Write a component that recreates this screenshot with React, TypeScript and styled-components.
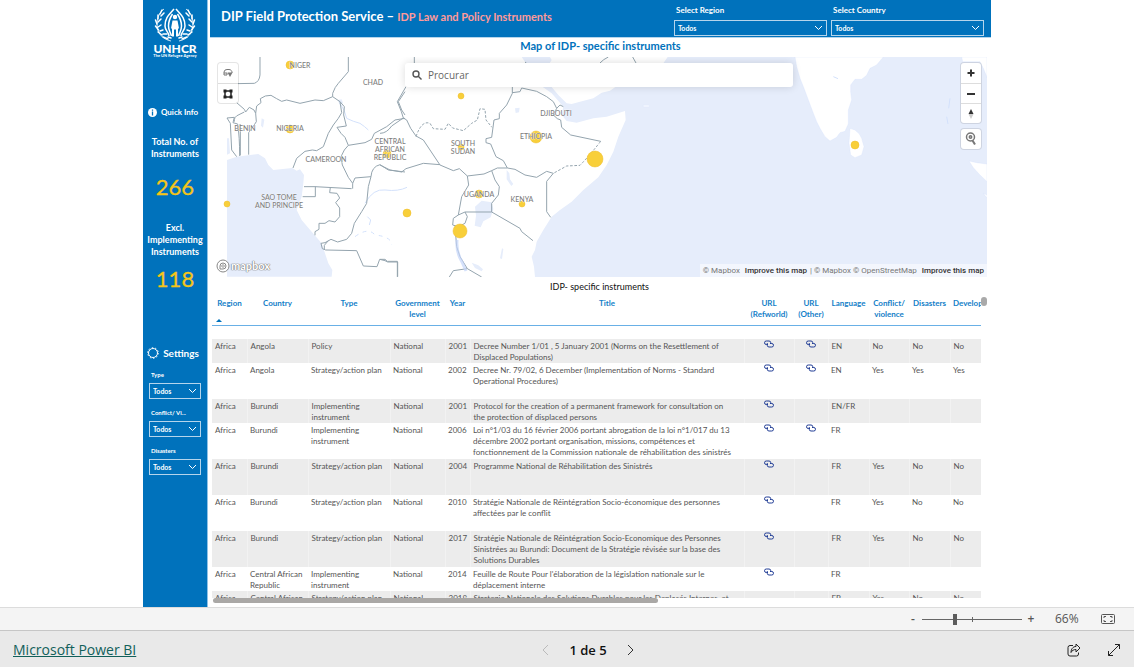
import React from "react";
import styled, { createGlobalStyle } from "styled-components";

const BLUE = "#0072bc";
const GOLD = "#f5c518";
const LATO = 'Lato, "Open Sans", sans-serif';
const UI = '"Open Sans", "Noto Sans", sans-serif';

const GlobalStyle = createGlobalStyle`
  *, *::before, *::after { box-sizing: border-box; }
  body { margin: 0; background: #fff; font-family: ${LATO}; }
  button { font: inherit; padding: 0; border: 0; background: none; cursor: pointer; }
`;

const Page = styled.div`
  display: flex;
  flex-direction: column;
  min-height: 100vh;
`;

const Report = styled.div`
  flex: 1;
  display: flex;
  width: 100%;
  max-width: 848px;
  margin: 0 auto;
`;

/* ---------- Sidebar ---------- */

const Sidebar = styled.aside`
  flex: none;
  width: 65px;
  padding-top: 6px;
  display: flex;
  flex-direction: column;
  align-items: center;
  background: ${BLUE};
  border-right: 1px solid #8fc1e6;
  color: #fff;
`;

const Brand = styled.div`
  display: flex;
  flex-direction: column;
  align-items: center;
  height: 98px;
`;

const BrandName = styled.div`
  font: 900 12px/11px ${LATO};
`;

const BrandTag = styled.div`
  font: 700 4px/4px ${LATO};
  white-space: nowrap;
`;

const SideButton = styled.button<{ $size: number }>`
  display: flex;
  align-items: center;
  gap: 4px;
  padding-right: 4px;
  color: #fff;
  font: 700 ${(p) => p.$size}px/16px ${LATO};
  white-space: nowrap;
`;

const Stat = styled.div<{ $top: number }>`
  margin-top: ${(p) => p.$top}px;
  text-align: center;
  font: 700 9px/12px ${LATO};
`;

const StatValue = styled.div<{ $gap: number }>`
  margin-top: ${(p) => p.$gap}px;
  color: ${GOLD};
  font: 400 22px/30px ${LATO};
  -webkit-text-stroke: 0.3px ${GOLD};
`;

const Filters = styled.div`
  display: flex;
  flex-direction: column;
  gap: 9px;
  width: 52px;
  margin-top: 9px;
`;

const SettingsRow = styled.div`
  margin-top: 51px;
`;

/* ---------- Fields ---------- */

const Field = styled.div<{ $wide?: boolean }>`
  display: flex;
  flex-direction: column;
  gap: ${(p) => (p.$wide ? 4 : 3)}px;
  width: ${(p) => (p.$wide ? "153px" : "100%")};
`;

const FieldLabel = styled.label<{ $wide?: boolean }>`
  padding-left: 2px;
  color: #fff;
  font: 700 ${(p) => (p.$wide ? 8 : 6)}px/${(p) => (p.$wide ? 12 : 10)}px ${LATO};
`;

const SelectBox = styled.div`
  display: grid;
  align-items: center;
  height: 16px;
  border: 1px solid #b5d5ec;

  > * { grid-area: 1 / 1; }
  > svg { justify-self: end; margin-right: 3px; pointer-events: none; }
`;

const Select = styled.select`
  appearance: none;
  width: 100%;
  height: 14px;
  padding: 0 3px;
  border: 0;
  background: transparent;
  color: #fff;
  font: 700 7px/14px ${LATO};
`;

/* ---------- Main area ---------- */

const Main = styled.main`
  flex: 1;
  min-width: 0;
  padding-left: 2px;
`;

const Banner = styled.header`
  display: flex;
  align-items: flex-start;
  height: 38px;
  padding: 4px 7px 0 11px;
  gap: 4px;
  background: ${BLUE};
  border-bottom: 1px solid #b5d5ec;
`;

const BannerTitle = styled.h1`
  flex: 1;
  margin: 3px 0 0;
  color: #fff;
  font: 700 13px/18px ${LATO};
  white-space: nowrap;

  span { color: #ff9a9a; font-size: 11px; }
`;

const MapTitle = styled.h2`
  margin: 0;
  padding-bottom: 3px;
  color: ${BLUE};
  text-align: center;
  font: 700 11px/16px ${LATO};
`;

const MapFrame = styled.section`
  position: relative;
  height: 220px;
  margin: 0 4px 0 6px;
  overflow: hidden;
`;

const MapSvg = styled.svg`
  display: block;
  width: 100%;
  height: 100%;
`;

const SearchBox = styled.label`
  position: absolute;
  top: 6px;
  left: 189px;
  right: 194px;
  height: 24px;
  display: flex;
  align-items: center;
  gap: 4px;
  padding: 0 7px;
  background: #fff;
  border-radius: 3px;
  box-shadow: 0 0 8px rgba(0, 0, 0, 0.14);

  input {
    flex: 1;
    min-width: 0;
    border: 0;
    outline: 0;
    background: none;
    font: 400 10px/16px ${UI};
  }
  input::placeholder { color: #666; opacity: 1; }
`;

const MapControls = styled.div<{ $side: "left" | "right"; $top: number }>`
  position: absolute;
  top: ${(p) => p.$top}px;
  ${(p) => (p.$side === "left" ? "left: 2px;" : "right: 6px;")}
  width: 20px;
  background: #fff;
  border-radius: 3px;
  box-shadow: 0 0 0 1px rgba(0, 0, 0, 0.1);

  button {
    display: flex;
    align-items: center;
    justify-content: center;
    width: 20px;
    height: 20px;
  }
  button + button { border-top: 1px solid #ddd; }
`;

const Attribution = styled.div`
  position: absolute;
  right: 0;
  bottom: 0;
  padding: 0 3px;
  background: rgba(255, 255, 255, 0.5);
  color: #777;
  font: 400 8px/13px Roboto, sans-serif;
  white-space: nowrap;

  a { color: #777; text-decoration: none; }
  a.strong { color: #333; margin: 0 1px 0 3px; font-weight: 500; }
  a.strong:last-child { margin-right: 0; }
`;

const MapboxLogo = styled.a`
  position: absolute;
  left: 0;
  bottom: 4px;
  display: flex;
  align-items: center;
  gap: 1px;
  color: #fff;
  text-decoration: none;
  font: 700 11px/14px ${LATO};
  text-shadow: 0 0 1px #777, 0 0 1px #777, 0 0 1px #777;
`;

/* ---------- Table ---------- */

const TableTitle = styled.h2`
  margin: 0;
  padding-right: 2px;
  color: #111;
  text-align: center;
  font: 400 9px/20px ${LATO};
`;

const TableArea = styled.section`
  display: flex;
  align-items: flex-start;
  padding: 0 4px 0 2px;
`;

const TableClip = styled.div`
  flex: 1;
  min-width: 0;
  height: 301px;
  overflow: hidden;
`;

const DataTable = styled.table`
  width: 100%;
  table-layout: fixed;
  border-collapse: collapse;
  color: #555;
  font: 400 8px/11px ${LATO};

  th {
    height: 28px;
    padding: 1px 0 0;
    vertical-align: top;
    color: #1480c8;
    font-weight: 700;
    border-bottom: 1px solid #69b0e6;
    overflow: hidden;
  }
  tbody::before { content: ""; display: block; height: 13px; }
  td {
    padding: 2px 3px 0;
    vertical-align: top;
  }
  tbody tr:nth-child(odd) td { background: #ececec; }
  tbody tr:nth-child(odd) td + td { border-left: 1px solid #f2f2f2; }
  td.year { text-align: right; padding-right: 4px; }
  td.title { padding-right: 10px; }
  td.link { text-align: center; padding-top: 0; }
  td.link svg { display: block; margin: 1px auto 0; }
`;

const Row = styled.tr<{ $lines: number }>`
  height: ${(p) => (p.$lines === 2 ? 24 : 36)}px;
`;

const HeaderText = styled.span<{ $start?: boolean }>`
  display: block;
  padding-left: ${(p) => (p.$start ? 3 : 0)}px;
  text-align: ${(p) => (p.$start ? "left" : "center")};
`;

const SortMark = styled.span`
  display: block;
  width: 0;
  margin: 10px 0 0 4px;
  border: 3px solid transparent;
  border-top: 0;
  border-bottom-color: ${BLUE};
`;

const VerticalThumb = styled.div`
  width: 6px;
  height: 9px;
  border-radius: 3px;
  background: #a9a9a9;
`;

const HorizontalThumb = styled.div`
  width: 57%;
  height: 5px;
  margin-left: 3px;
  border-radius: 3px;
  background: #aaa8a6;
`;

/* ---------- Bottom bars ---------- */

const ZoomBar = styled.div`
  display: flex;
  align-items: center;
  justify-content: flex-end;
  height: 23px;
  padding-right: 19px;
  background: #f4f4f4;
  border-top: 1px solid #dcdcdc;
  color: #555;
  font: 400 12px/22px ${UI};

  button { width: 18px; color: #555; font-weight: 600; }
  button:last-child { width: 14px; }
  svg { display: block; }
`;

const ZoomRange = styled.input`
  appearance: none;
  width: 100px;
  height: 12px;
  margin: 0;
  background:
    linear-gradient(#666, #666) 50px 50% / 1px 5px no-repeat,
    linear-gradient(#666, #666) 0 50% / 100% 1px no-repeat;

  &::-webkit-slider-thumb {
    appearance: none;
    width: 4px;
    height: 11px;
    background: #5c5c5c;
  }
`;

const ZoomValue = styled.span`
  width: 61px;
  padding-left: 15px;
`;

const Footer = styled.footer`
  display: grid;
  grid-template-columns: 1fr auto 1fr;
  align-items: center;
  height: 37px;
  padding: 2px 13px 0;
  background: #e9e9e9;
  border-top: 1px solid #c6c6c6;

  > a { color: #11605a; font: 400 14px/20px ${UI}; }
`;

const Pager = styled.nav`
  display: flex;
  align-items: center;
  gap: 20px;
  padding-left: 42px;
  color: #111;
  font: 600 13px/20px ${UI};

  button { display: flex; }
`;

const FooterActions = styled.div`
  display: flex;
  justify-content: flex-end;
  gap: 26px;

  button { display: flex; }
`;

/* ---------- Icons ---------- */

const Chevron = () => (
  <svg width="9" height="6" viewBox="0 0 9 6" fill="none" stroke="#fff">
    <path d="M1 1l3.5 3.5L8 1" />
  </svg>
);

const LinkIcon = () => (
  <svg width="10" height="8" viewBox="0 0 20 16" fill="none" stroke="#233f96" strokeWidth="2">
    <path d="M8 9H4.500a3.500 3.500 0 0 1 0-7H10a3.500 3.500 0 0 1 3.500 3.500V8" />
    <path d="M12 7h3.500a3.500 3.500 0 0 1 0 7H10a3.500 3.500 0 0 1-3.500-3.500V6" />
  </svg>
);

const Emblem = () => (
  <svg width="42" height="37" viewBox="0 0 42 37" fill="none" stroke="#fff">
    <g strokeWidth="0.800">
      <path d="M17 35C8 33 3 27 3 18 3 11 6 6 10 3M25 35c9-2 14-8 14-17 0-7-3-12-7-15" />
    </g>
    <g strokeWidth="1.500" strokeLinecap="round">
      <path d="M8 4L6 8M4 9l0 4M1.500 14l1.500 4M1.500 20l3 4M4 26l4 3M9 31l5 2M10 7L7 10M7 13l-3 3M7 19l-3 2M9 24l-3 1M13 28l-4 0M17 32l-3-1" />
      <path d="M34 4l2 4M38 9l0 4M40.500 14L39 18M40.500 20l-3 4M38 26l-4 3M33 31l-5 2M32 7l3 3M35 13l3 3M35 19l3 2M33 24l3 1M29 28l4 0M25 32l3-1" />
    </g>
    <g strokeWidth="1.500">
      <path d="M15 30c0-4-4-5-4-10C11 11 16 8 20 3M17.500 30c-1-4-3-5-3-10 0-6 2-9 4-12" />
      <path d="M27 30c0-4 4-5 4-10 0-9-5-12-9-17M24.500 30c1-4 3-5 3-10 0-6-2-9-4-12" />
    </g>
    <circle cx="21" cy="11" r="2.200" fill="#fff" stroke="none" />
    <path d="M18.500 14.500h5l1.500 8H24v8h-2v-7h-2v7h-2v-8h-1z" fill="#fff" stroke="none" />
  </svg>
);

/* ---------- Map drawing ---------- */

const WATER = "#e6edfb";

const labels: [number, number, string][] = [
  [300, 68, "NIGER"], [373, 85, "CHAD"], [245, 131, "BENIN"], [290, 131, "NIGERIA"],
  [326, 162, "CAMEROON"], [390, 144, "CENTRAL"], [390, 152, "AFRICAN"], [390, 160, "REPUBLIC"],
  [463, 146, "SOUTH"], [463, 154, "SUDAN"], [556, 116, "DJIBOUTI"], [536, 139, "ETHIOPIA"],
  [479, 197, "UGANDA"], [522, 202, "KENYA"], [279, 200, "SAO TOME"], [279, 208, "AND PRINCIPE"],
];

const bubbles: [number, number, number][] = [
  [290, 65, 4], [290, 129, 4], [387, 154, 4], [461, 96, 3], [461, 147, 3], [536, 137, 6],
  [595, 159, 8], [479, 194, 4], [522, 204, 3], [407, 213, 4], [460, 231, 7], [227, 204, 3], [855, 145, 4],
];

const WorldMap = () => (
  <MapSvg viewBox="216 57 771 220" preserveAspectRatio="xMidYMid slice" role="img" aria-label="Map">
    <g transform="translate(380 40) scale(0.33333)">
      <path
        fill={WATER}
        d="M425 51L445 80 480 135 515 160 550 200 545 225 560 243 590 248 640 235 680 230 735 213 737 240 715 290 700 335 680 375 655 412 610 450 575 485 540 510 515 530 490 570 470 605 465 630 455 650 462 680 465 711H1821V51H863L850 70 800 100 730 135 705 142 690 152 665 158 640 175 600 185 575 192 560 190 535 165 515 141 490 100 515 60 510 51Z"
      />
      <path fill={WATER} d="M285 500l20-18 30 5 5 20-8 25-22 12-8 18-18-5 4-30zM405 205l14-2-2 14-10 2zM380 390l8 10 2 18 10 14-6 6-14-20zM275 668l20 8 14 12-4 6-20-10zM360 655l6-30 4 2-4 30z" />
    </g>
    <g transform="translate(205 50) scale(0.33333)">
      <path
        fill={WATER}
        d="M66 330L95 320 160 312 180 325 190 345 205 360 262 354 275 362 285 358 297 375 295 400 290 440 275 480 290 510 320 545 350 580 360 610 370 640 382 660 380 680H66ZM66 265l6 0 3 45-9 4zM170 205l8 4-4 24-6-6zM398 150l12-2 4 10-10 6z"
      />
      <path
        fill="none"
        stroke="#d3e1fb"
        strokeWidth="3"
        d="M405 160q15 20 20 45 20 10 40 15 15 10 25 20M480 460q25-45 60-40 40 5 66-8M487 500l10 10-4 15"
      />
      <path fill="none" stroke="#d3e1fb" strokeWidth="3" strokeDasharray="12 14" d="M450 560q40-30 60-5 50 5 50 30" />
    </g>
    <g transform="translate(600 0) scale(0.33333)" fill="#fff" stroke="#d3e1fb" strokeWidth="1">
      <path d="M585 171L590 200 600 235 612 265 625 300 640 340 650 365 660 385 675 410 690 423 710 412 720 398 735 394 745 372 745 330 755 300 752 275 752 255 765 238 785 238 800 226 810 205 830 195 850 171Z" />
      <path d="M750 385L765 390 778 402 785 415 792 440 785 465 765 473 752 465 747 430Z" />
      <path d="M1085 171L1088 185 1140 185 1150 205 1161 232V171Z" />
      <path d="M1107 483L1130 488 1161 492V545L1140 525 1120 503ZM1150 580l11 5v9zM130 316h18v4h-18z" />
      <path d="M700 230l14 6M1050 295l-4 30M1040 350l4 22" fill="none" strokeWidth="3" />
    </g>
    <g fill="none" stroke="#94a4ae" strokeWidth="3" strokeLinejoin="round">
      <g transform="translate(205 50) scale(0.33333)">
        <path d="M165 21V75Q163 95 148 100L90 101M95 158L118 178 122 186 133 172 147 180 152 190 155 168 168 158 166 146Q180 135 198 136L215 146 230 154 245 150 285 160 330 150 355 152 383 140 383 130Q390 110 400 100L430 65V21" />
        <path d="M66 204L88 202 84 218 98 222Q104 260 104 318M88 215Q86 200 102 194L118 186M66 204L76 220 80 300 95 320M104 225Q108 215 106 240V316M152 190L154 215Q145 230 131 248V314" />
        <path d="M383 140L405 155 410 188 400 205 385 225 370 250 355 290 335 302 322 300 300 304 275 325 264 354M405 155L418 170 416 195 424 228 396 232 408 250 420 262 430 286 418 300 408 320 412 345 430 382 443 400 443 416" />
        <path d="M430 286L480 278 500 268 508 250 545 230 570 210 600 205M600 125L580 155 590 180 600 195M297 410H330L440 416M293 440H331V410M376 412L374 428 396 430 404 444 392 458 404 474 404 500 390 516 372 512 360 520 342 520 342 538 330 545 330 556" />
        <path d="M443 400L450 384 498 380 490 410 485 460 470 485 448 520 440 550 425 568 398 576 378 568 360 578 348 580 352 596 362 600 455 602 475 648 516 650 524 628 540 632 548 636 578 636V680M498 380Q500 350 525 344L550 360 600 366" />
        <path d="M358 598L358 586 370 572" />
      </g>
      <g transform="translate(380 40) scale(0.33333)">
        <path d="M103 51V75M78 140L52 185 64 215 70 234 80 240 92 265 108 288 130 300 150 330 180 375 220 392 238 386 262 408 312 402 335 392 352 384 382 384 405 388 435 405 470 412 500 394 520 400M0 280Q20 280 35 258L70 234M0 375L30 390 65 396 78 386 130 370 180 374" />
        <path d="M108 290Q125 240 150 250L160 266 195 268 205 250 218 264 250 272 275 250 292 240 300 206 315 208 318 240 336 262" strokeDasharray="8 5" />
        <path d="M397 141V160L380 195 358 220 358 236 342 240 338 270 335 292 318 296 318 308 332 312 348 350 370 362 382 384M397 158L420 155 425 144 470 154 500 170 520 185 530 205 520 225 532 236 542 240 545 262 572 285 662 304M530 205L540 195 550 200" />
        <path d="M662 304Q630 345 600 376L560 378 520 400" strokeDasharray="8 5" />
        <path d="M520 400L500 424V515L512 532M262 408L266 435 245 470 235 525M335 392L345 420 358 440 355 465 335 490V516L420 565 425 575 459 602M335 516H255L235 525 220 535 218 555 235 560 255 550 262 530 255 516M225 560L230 620 240 650 262 686 305 711M262 686L220 692 208 711M0 658H15L22 664H52V711" />
        <path d="M660 69Q670 58 685 51M758 51L768 69M435 66L440 70" />
      </g>
    </g>
    <path d="M457 240Q456 252 462 262L466 271" fill="none" stroke="#c3d4fa" strokeWidth="3" opacity="0.700" />
    {bubbles.map(([x, y, r]) => (
      <circle key={`${x}-${y}`} cx={x} cy={y} r={r} fill="#f8cf3a" stroke="#eebd2c" strokeWidth="0.500" />
    ))}
    <g fill="#7d7d7d" stroke="#fff" strokeWidth="0.500" paintOrder="stroke" fontFamily={LATO} fontSize="7" textAnchor="middle" fontWeight="500">
      {labels.map(([x, y, t]) => (
        <text key={t} x={x} y={y}>{t}</text>
      ))}
    </g>
  </MapSvg>
);

/* ---------- Data ---------- */

type Instrument = {
  country: string; type: string; year: number; title: string; lines: number;
  noRefworld?: boolean; other?: boolean; lang: string; flags?: [string, string, string];
};

const SAP = "Strategy/action plan";
const IMP = "Implementing instrument";

const instruments: Instrument[] = [
  { country: "Angola", type: "Policy", year: 2001, lines: 2, other: true, lang: "EN", flags: ["No", "No", "No"], title: "Decree Number 1/01 , 5 January 2001 (Norms on the Resettlement of Displaced Populations)" },
  { country: "Angola", type: SAP, year: 2002, lines: 3, other: true, lang: "EN", flags: ["Yes", "Yes", "Yes"], title: "Decree Nr. 79/02, 6 December (Implementation of Norms - Standard Operational Procedures)" },
  { country: "Burundi", type: IMP, year: 2001, lines: 2, lang: "EN/FR", title: "Protocol for the creation of a permanent framework for consultation on the protection of displaced persons" },
  { country: "Burundi", type: IMP, year: 2006, lines: 3, other: true, lang: "FR", title: "Loi n°1/03 du 16 février 2006 portant abrogation de la loi n°1/017 du 13 décembre 2002 portant organisation, missions, compétences et fonctionnement de la Commission nationale de réhabilitation des sinistrés" },
  { country: "Burundi", type: SAP, year: 2004, lines: 3, lang: "FR", flags: ["Yes", "No", "No"], title: "Programme National de Réhabilitation des Sinistrés" },
  { country: "Burundi", type: SAP, year: 2010, lines: 3, lang: "FR", flags: ["Yes", "No", "No"], title: "Stratégie Nationale de Réintégration Socio-économique des personnes affectées par le conflit" },
  { country: "Burundi", type: SAP, year: 2017, lines: 3, lang: "FR", flags: ["Yes", "No", "No"], title: "Stratégie Nationale de Réintégration Socio-Economique des Personnes Sinistrées au Burundi: Document de la Stratégie révisée sur la base des Solutions Durables" },
  { country: "Central African Republic", type: IMP, year: 2014, lines: 2, lang: "FR", title: "Feuille de Route Pour l'élaboration de la législation nationale sur le déplacement interne" },
  { country: "Central African Republic", type: SAP, year: 2018, lines: 2, noRefworld: true, lang: "FR", flags: ["Yes", "No", "No"], title: "Strategie Nationale des Solutions Durables pour les Deplacés Internes, et" },
];

const columnWidths = [35, 61, 82, 55, 25, undefined, 50, 34, 41, 40, 41, 31];

const Slicer = ({ id, label, wide }: { id: string; label: string; wide?: boolean }) => (
  <Field $wide={wide}>
    <FieldLabel htmlFor={id} $wide={wide}>{label}</FieldLabel>
    <SelectBox>
      <Select id={id}><option>Todos</option></Select>
      <Chevron />
    </SelectBox>
  </Field>
);

export default function App() {
  return (
    <Page>
      <GlobalStyle />
      <Report>
        <Sidebar>
          <Brand>
            <Emblem />
            <BrandName>UNHCR</BrandName>
            <BrandTag>The UN Refugee Agency</BrandTag>
          </Brand>
          <SideButton $size={8}>
            <svg width="9" height="9" viewBox="0 0 9 9">
              <circle cx="4.500" cy="4.500" r="4.500" fill="#fff" />
              <path d="M4.500 1.500v1.200M4.500 3.500v4" stroke={BLUE} strokeWidth="1.300" />
            </svg>
            Quick Info
          </SideButton>
          <Stat $top={16}>
            Total No. of<br />Instruments
            <StatValue $gap={12}>266</StatValue>
          </Stat>
          <Stat $top={20}>
            Excl.<br />Implementing<br />Instruments
            <StatValue $gap={6}>118</StatValue>
          </Stat>
          <SettingsRow>
            <SideButton $size={10}>
              <svg width="12" height="12" viewBox="0 0 12 12" fill="none" stroke="#fff">
                <circle cx="6" cy="6" r="4.500" />
                <circle cx="6" cy="6" r="5.300" strokeDasharray="1.500 1.800" />
              </svg>
              Settings
            </SideButton>
          </SettingsRow>
          <Filters>
            <Slicer id="type" label="Type" />
            <Slicer id="conflict" label="Conflict/ Vi..." />
            <Slicer id="disasters" label="Disasters" />
          </Filters>
        </Sidebar>

        <Main>
          <Banner>
            <BannerTitle>DIP Field Protection Service – <span>IDP Law and Policy Instruments</span></BannerTitle>
            <Slicer id="region" label="Select Region" wide />
            <Slicer id="country" label="Select Country" wide />
          </Banner>
          <MapTitle>Map of IDP- specific instruments</MapTitle>
          <MapFrame>
            <WorldMap />
            <MapControls $side="left" $top={6}>
              <button aria-label="Lasso select">
                <svg width="10" height="10" viewBox="0 0 10 10" fill="none" stroke="#777">
                  <path d="M1 7V4a3 3 0 0 1 3-2.500h2A3 3 0 0 1 9 5M1 5h3v2H1" />
                  <path d="M4.500 4.500h5L7 9z" fill="#777" stroke="none" />
                </svg>
              </button>
              <button aria-label="Box select">
                <svg width="10" height="10" viewBox="0 0 10 10" fill="#222">
                  <path d="M2 2h6v6H2z" fill="none" stroke="#222" strokeWidth="1.500" />
                  <path d="M.5.5h3v3h-3zM6.500.5h3v3h-3zM.5 6.500h3v3h-3zM6.500 6.500h3v3h-3z" />
                </svg>
              </button>
            </MapControls>
            <SearchBox>
              <svg width="10" height="10" viewBox="0 0 10 10" fill="none" stroke="#555" strokeWidth="1.400">
                <circle cx="4" cy="4" r="3" /><path d="M6 6l3.500 3.500" />
              </svg>
              <input type="text" placeholder="Procurar" aria-label="Procurar" />
            </SearchBox>
            <MapControls $side="right" $top={6}>
              <button aria-label="Zoom in">
                <svg width="8" height="8" viewBox="0 0 8 8" stroke="#333" strokeWidth="2"><path d="M4 .5v7M.5 4h7" /></svg>
              </button>
              <button aria-label="Zoom out">
                <svg width="8" height="8" viewBox="0 0 8 8" stroke="#333" strokeWidth="2"><path d="M0 4h8" /></svg>
              </button>
              <button aria-label="Reset bearing">
                <svg width="6" height="12" viewBox="0 0 6 12"><path d="M.5 6L3 1l2.500 5z" fill="#333" /><path d="M.5 6L3 11l2.500-5z" fill="#ccc" /></svg>
              </button>
            </MapControls>
            <MapControls $side="right" $top={72}>
              <button aria-label="Zoom to selection">
                <svg width="12" height="14" viewBox="0 0 12 14" fill="none" stroke="#777" strokeWidth="1.500">
                  <circle cx="5.500" cy="5" r="4" /><circle cx="5.500" cy="5" r="1.200" /><path d="M7.500 8.500l2.500 4" strokeWidth="2" />
                </svg>
              </button>
            </MapControls>
            <MapboxLogo href="#mapbox">
              <svg width="14" height="14" viewBox="0 0 14 14" fill="#fff" stroke="#888">
                <circle cx="7" cy="7" r="6" /><path d="M4 10V7a3 3 0 1 1 3 3z" /><path d="M7 5.500L8.500 7 7 8.500 5.500 7z" />
              </svg>
              mapbox
            </MapboxLogo>
            <Attribution>
              <a href="#m1">© Mapbox</a> <a className="strong" href="#i1">Improve this map</a> | <a href="#m2">© Mapbox</a>{" "}
              <a href="#osm">© OpenStreetMap</a> <a className="strong" href="#i2">Improve this map</a>
            </Attribution>
          </MapFrame>

          <TableTitle>IDP- specific instruments</TableTitle>
          <TableArea>
            <TableClip>
              <DataTable>
                <colgroup>
                  {columnWidths.map((w, i) => <col key={i} width={w} />)}
                </colgroup>
                <thead>
                  <tr>
                    <th><HeaderText>Region</HeaderText><SortMark /></th>
                    <th><HeaderText>Country</HeaderText></th>
                    <th><HeaderText>Type</HeaderText></th>
                    <th><HeaderText>Government level</HeaderText></th>
                    <th><HeaderText>Year</HeaderText></th>
                    <th><HeaderText>Title</HeaderText></th>
                    <th><HeaderText>URL (Refworld)</HeaderText></th>
                    <th><HeaderText>URL (Other)</HeaderText></th>
                    <th><HeaderText>Language</HeaderText></th>
                    <th><HeaderText>Conflict/ violence</HeaderText></th>
                    <th><HeaderText>Disasters</HeaderText></th>
                    <th><HeaderText $start>Development</HeaderText></th>
                  </tr>
                </thead>
                <tbody>
                  {instruments.map((r, i) => (
                    <Row key={i} $lines={r.lines}>
                      <td>Africa</td>
                      <td>{r.country}</td>
                      <td>{r.type}</td>
                      <td>National</td>
                      <td className="year">{r.year}</td>
                      <td className="title">{r.title}</td>
                      <td className="link">{!r.noRefworld && <a href="#refworld" aria-label="Refworld"><LinkIcon /></a>}</td>
                      <td className="link">{r.other && <a href="#other" aria-label="Other"><LinkIcon /></a>}</td>
                      <td>{r.lang}</td>
                      <td>{r.flags?.[0]}</td>
                      <td>{r.flags?.[1]}</td>
                      <td>{r.flags?.[2]}</td>
                    </Row>
                  ))}
                </tbody>
              </DataTable>
            </TableClip>
            <VerticalThumb />
          </TableArea>
          <HorizontalThumb />
        </Main>
      </Report>

      <ZoomBar>
        <button aria-label="Zoom out">-</button>
        <ZoomRange type="range" min={0} max={100} defaultValue={32} aria-label="Zoom" />
        <button aria-label="Zoom in">+</button>
        <ZoomValue>66%</ZoomValue>
        <button aria-label="Fit to page">
          <svg width="14" height="12" viewBox="0 0 14 12" fill="none" stroke="#555">
            <rect x=".5" y="1.500" width="13" height="9" rx="1" />
            <path d="M5 3.500H3v1.500M9 3.500h2v1.500M5 8.500H3V7M9 8.500h2V7" />
          </svg>
        </button>
      </ZoomBar>
      <Footer>
        <a href="#powerbi">Microsoft Power BI</a>
        <Pager aria-label="Pages">
          <button aria-label="Previous page" disabled>
            <svg width="7" height="12" viewBox="0 0 7 12" fill="none" stroke="#bbb"><path d="M6 1L1 6l5 5" /></svg>
          </button>
          <span>1 de 5</span>
          <button aria-label="Next page">
            <svg width="7" height="12" viewBox="0 0 7 12" fill="none" stroke="#333"><path d="M1 1l5 5-5 5" /></svg>
          </button>
        </Pager>
        <FooterActions>
          <button aria-label="Share">
            <svg width="14" height="14" viewBox="0 0 14 14" fill="none" stroke="#222">
              <path d="M6 2.500H3a2 2 0 0 0-2 2V11a2 2 0 0 0 2 2h6.500a2 2 0 0 0 2-2V9.500" />
              <path d="M9 1l4 4-4 4V6.500C6.500 6.500 5 7.500 4 9.500 4 6 6 3.500 9 3.500z" strokeLinejoin="round" />
            </svg>
          </button>
          <button aria-label="Full screen">
            <svg width="14" height="14" viewBox="0 0 14 14" fill="none" stroke="#222">
              <path d="M1.500 12.500l11-11M8 1.500h4.500V6M1.500 8v4.500H6" />
            </svg>
          </button>
        </FooterActions>
      </Footer>
    </Page>
  );
}
